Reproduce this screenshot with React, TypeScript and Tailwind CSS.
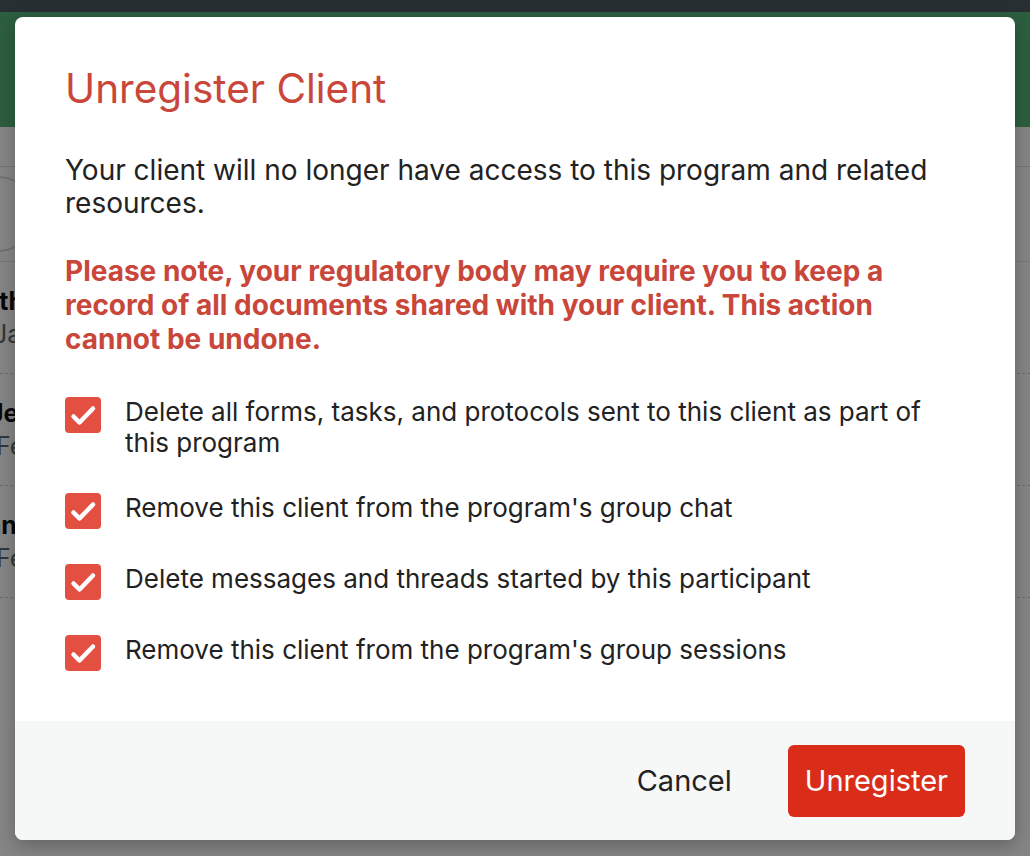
import React from 'react'

const options = [
  "Delete all forms, tasks, and protocols sent to this client as part of this program",
  "Remove this client from the program's group chat",
  'Delete messages and threads started by this participant',
  "Remove this client from the program's group sessions",
]

const Check = () => (
  <span className="mt-[1px] flex h-9 w-9 shrink-0 items-center justify-center rounded-[4px] bg-[#e34f40]">
    <svg viewBox="0 0 36 36" className="h-9 w-9" fill="none">
      <path d="M8.5 19.5 L14.5 25.5 L28 11.5" stroke="white" strokeWidth="4.5" strokeLinecap="round" strokeLinejoin="round" />
    </svg>
  </span>
)

const Background = () => (
  <div className="flex h-full w-full flex-col bg-white">
    <div className="h-3 bg-[#4c5a63]" />
    <div className="h-[115px] bg-[#57b579]" />
    <div className="h-10 border-b border-[#dcdcdc]" />
    <div className="flex h-[95px] items-center border-b border-[#e4e4e4]">
      <div className="-ml-[40px] h-[76px] w-[76px] rounded-full border-2 border-[#d8d8d8]" />
    </div>
    <div className="flex h-[112px] flex-col justify-center border-b border-dashed border-[#d0d0d0]">
      <div className="-ml-[16px] whitespace-nowrap text-[25px] font-bold leading-[32px] text-[#111]">Ethan Walker</div>
      <div className="-ml-[7px] whitespace-nowrap text-[25px] leading-[34px] text-[#5d6a70]">Jan 14, 2024</div>
    </div>
    <div className="flex h-[112px] flex-col justify-center border-b border-dashed border-[#d0d0d0]">
      <div className="-ml-[11px] whitespace-nowrap text-[25px] font-bold leading-[32px] text-[#111]">Jessica Moore</div>
      <div className="-ml-[4px] whitespace-nowrap text-[25px] leading-[34px] text-[#5d6a70]">Feb 2, 2024</div>
    </div>
    <div className="flex h-[112px] flex-col justify-center border-b border-dashed border-[#d0d0d0]">
      <div className="-ml-[33px] whitespace-nowrap text-[25px] font-bold leading-[32px] text-[#111]">Ann Fisher</div>
      <div className="-ml-[4px] whitespace-nowrap text-[25px] leading-[34px] text-[#5d6a70]">Feb 9, 2024</div>
    </div>
  </div>
)

export default function App() {
  return (
    <div className="relative h-[856px] w-[1030px] overflow-hidden font-['Inter','Noto_Sans',sans-serif]">
      <Background />
      <div className="absolute inset-0 flex items-center justify-center bg-black/[0.48]">
        <div className="flex w-[1000px] flex-col overflow-hidden rounded-[8px] bg-white shadow-[0_6px_18px_rgba(0,0,0,0.25)]">
          <div className="pb-[50px] pl-[50px] pr-[52px] pt-[48px]">
            <h2 className="text-[40.5px] leading-[48px] text-[#c9473a]">Unregister Client</h2>
            <p className="mt-[41px] text-[28px] leading-[33px] text-[#222]">
              Your client will no longer have access to this program and related resources.
            </p>
            <p className="mt-[34px] text-[28px] font-bold leading-[34px] text-[#c9463a]">
              Please note, your regulatory body may require you to keep a record of all documents shared with your client. This action cannot be undone.
            </p>
            <div className="mt-[40px] flex flex-col gap-[34px]">
              {options.map((o) => (
                <label key={o} className="flex items-start gap-6">
                  <Check />
                  <span className="text-[26px] leading-[31px] text-[#222]">{o}</span>
                </label>
              ))}
            </div>
          </div>
          <div className="flex items-center justify-end gap-[38px] bg-[#f6f8f7] px-[50px] pb-[23px] pt-[24px]">
            <button className="px-[18px] text-[29px] text-[#222]">Cancel</button>
            <button className="h-[72px] rounded-[6px] bg-[#d92d1a] px-[17px] text-[29px] text-white">Unregister</button>
          </div>
        </div>
      </div>
    </div>
  )
}
